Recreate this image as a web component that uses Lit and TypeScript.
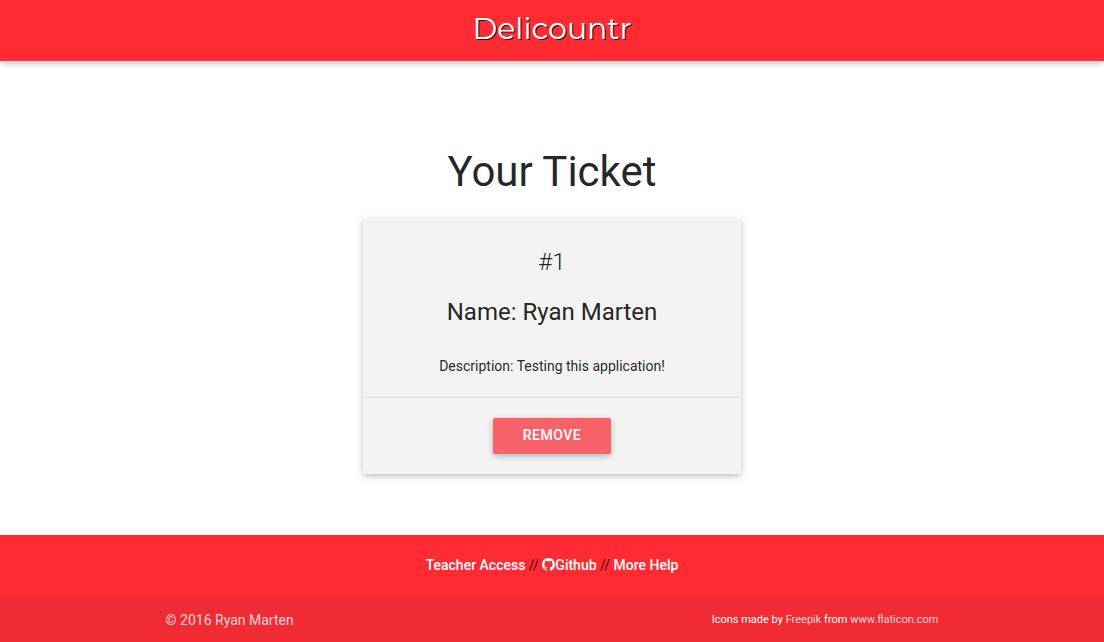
import { LitElement, html, css } from "lit";
import { customElement, property } from "lit/decorators.js";

interface Ticket {
  place: number;
  name: string;
  description: string;
}

@customElement("ticket-card")
class TicketCard extends LitElement {
  @property({ attribute: false }) ticket!: Ticket;

  static styles = css`
    :host {
      display: block;
      width: 378px;
      max-width: 100%;
      background: #f3f3f3;
      border-radius: 2px;
      box-shadow: 0 2px 5px 0 rgba(0, 0, 0, 0.16),
        0 2px 10px 0 rgba(0, 0, 0, 0.12);
    }
    .content {
      padding: 24px 20px 20px;
    }
    .place,
    .name {
      margin: 0;
      font-size: 24px;
      line-height: 38px;
    }
    .place {
      font-weight: 300;
    }
    .name {
      margin: 12px 0 24px;
      font-weight: 400;
    }
    .description {
      margin: 0;
      font-size: 14px;
      line-height: 22px;
    }
    .action {
      padding: 20px;
      border-top: 1px solid #dddddd;
      display: flex;
      justify-content: center;
    }
    .remove {
      height: 36px;
      padding: 0 30px 2px;
      border: 0;
      border-radius: 2px;
      background: #f76268;
      color: #fff;
      font: 500 14px/34px Roboto, sans-serif;
      letter-spacing: 0.5px;
      text-transform: uppercase;
      cursor: pointer;
      box-shadow: 0 2px 5px 0 rgba(0, 0, 0, 0.16),
        0 2px 10px 0 rgba(0, 0, 0, 0.12);
    }
  `;

  render() {
    return html`
      <div class="content">
        <p class="place">#${this.ticket.place}</p>
        <h2 class="name">Name: ${this.ticket.name}</h2>
        <p class="description">Description: ${this.ticket.description}</p>
      </div>
      <div class="action">
        <button class="remove" type="button">Remove</button>
      </div>
    `;
  }
}

@customElement("app-root")
class AppRoot extends LitElement {
  static styles = css`
    :host {
      display: flex;
      flex-direction: column;
      min-height: 100vh;
      background: #fff;
      color: rgba(0, 0, 0, 0.87);
      font-family: Roboto, sans-serif;
      font-size: 14px;
      line-height: 22px;
      text-align: center;
    }
    a {
      color: inherit;
      text-decoration: none;
    }
    .bar {
      display: flex;
      justify-content: center;
      padding-bottom: 4px;
      background: #ff2b34;
      box-shadow: 0 2px 5px 0 rgba(0, 0, 0, 0.16),
        0 2px 10px 0 rgba(0, 0, 0, 0.12);
    }
    .brand {
      color: #fff;
      font-family: Montserrat, Inter, sans-serif;
      font-size: 30px;
      font-weight: 400;
      line-height: 57px;
      text-shadow: 1px 1px #1a1a1a;
    }
    .main {
      flex: 1;
      display: flex;
      flex-direction: column;
      align-items: center;
      gap: 22px;
      padding: 86px 12px 61px;
    }
    .title {
      margin: 0;
      font-size: 42px;
      line-height: 50px;
      font-weight: 400;
    }
    .links {
      padding: 20px 12px;
      background: #ff2b34;
      color: rgba(0, 0, 0, 0.87);
      line-height: 21px;
    }
    .links a {
      color: #fff;
      font-weight: 500;
    }
    .mark {
      width: 13px;
      height: 13px;
      fill: currentColor;
      vertical-align: -1px;
    }
    .copyright {
      padding-top: 2px;
      background: #f02b33;
      color: rgba(255, 255, 255, 0.8);
    }
    .row {
      width: 70%;
      margin: 0 auto;
      min-height: 44px;
      display: flex;
      flex-wrap: wrap;
      align-items: center;
      justify-content: space-between;
    }
    .credit {
      color: #fff;
      font-size: 11px;
    }
    .credit a {
      color: #fbd5d6;
    }
  `;

  private ticket: Ticket = {
    place: 1,
    name: "Ryan Marten",
    description: "Testing this application!",
  };

  render() {
    return html`
      <header class="bar"><a class="brand" href="#">Delicountr</a></header>
      <main class="main">
        <h1 class="title">Your Ticket</h1>
        <ticket-card .ticket=${this.ticket}></ticket-card>
      </main>
      <footer>
        <nav class="links">
          <a href="#">Teacher Access</a> //
          <a href="#"><svg class="mark" viewBox="0 0 1536 1536" aria-hidden="true">
            <path d="M768 0q209 0 385.500 103t279.500 279.500 103 385.500q0 251-146.500 451.500t-378.500 277.500q-27 5-40-7t-13-30q0-3 .5-76.500t.5-134.500q0-97-52-142 57-6 102.500-18t94-39 81-66.500 53-105 20.500-150.500q0-119-79-206 37-91-8-204-28-9-81 11t-92 44l-38 24q-93-26-192-26t-192 26q-16-11-42.500-27t-83.500-38.500-85-13.500q-45 113-8 204-79 87-79 206 0 85 20.500 150t52.500 105 80.500 67 94 39 102.500 18q-39 36-49 103-21 10-45 15t-57 5-65.500-21.500-55.500-62.500q-19-32-48.500-52t-49.500-24l-20-3q-21 0-29 4.500t-5 11.500 9 14 13 12l7 5q22 10 43.500 38t31.500 51l10 23q13 38 44 61.500t67 30 69.500 7 55.500-3.500l23-4q0 38 .5 88.500t.5 54.500q0 18-13 30t-40 7q-232-77-378.500-277.500t-146.500-451.500q0-209 103-385.500t279.500-279.500 385.500-103z"/>
          </svg>Github</a> //
          <a href="#">More Help</a>
        </nav>
        <div class="copyright">
          <div class="row">
            <span>© 2016 Ryan Marten</span>
            <span class="credit">Icons made by <a href="#">Freepik</a> from <a href="#">www.flaticon.com</a></span>
          </div>
        </div>
      </footer>
    `;
  }
}
